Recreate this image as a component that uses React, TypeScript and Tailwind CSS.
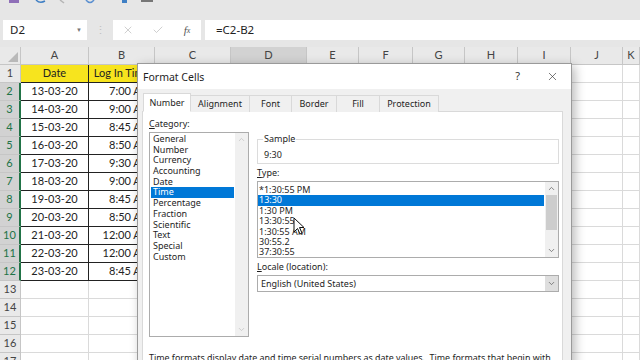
import React from 'react';
import { X, Check, ChevronUp, ChevronDown } from 'lucide-react';

// Spreadsheet data (A1:B12)
const rows: [string, string][] = [
  ['13-03-20', '7:00 AM'],
  ['14-03-20', '9:00 AM'],
  ['15-03-20', '8:45 AM'],
  ['16-03-20', '8:50 AM'],
  ['17-03-20', '9:30 AM'],
  ['18-03-20', '9:00 AM'],
  ['19-03-20', '8:45 AM'],
  ['20-03-20', '8:50 AM'],
  ['21-03-20', '12:00 AM'],
  ['22-03-20', '12:00 AM'],
  ['23-03-20', '8:45 AM'],
];

const letters = ['A', 'B', 'C', 'D', 'E', 'F', 'G', 'H', 'I', 'J', 'K'];
const gridCols =
  'grid grid-cols-[21px_68px_66px_76px_76px_52px_54px_52px_53px_53px_52px_1fr]';

const categories = [
  'General', 'Number', 'Currency', 'Accounting', 'Date', 'Time',
  'Percentage', 'Fraction', 'Scientific', 'Text', 'Special', 'Custom',
];

const types = ['*1:30:55 PM', '13:30', '1:30 PM', '13:30:55', '1:30:55 AM', '30:55.2', '37:30:55'];

const tabs = [
  { label: 'Number', w: 'w-[48px]' },
  { label: 'Alignment', w: 'w-[59px]' },
  { label: 'Font', w: 'w-[42px]' },
  { label: 'Border', w: 'w-[45px]' },
  { label: 'Fill', w: 'w-[43px]' },
  { label: 'Protection', w: 'w-[59px]' },
];

const FormulaBar = () => (
  <div className="h-[47px] bg-[#e6e6e6] flex flex-col font-['Noto_Sans',sans-serif]">
    <div className="h-[20px]">
      <svg width="170" height="6" viewBox="0 0 170 6">
        <rect x="9" y="0" width="10" height="3" fill="#8f6fb8" />
        <path d="M36 0 Q40 4 45 1" stroke="#3f7fc4" strokeWidth="1.5" fill="none" />
        <path d="M60 0 L64 3" stroke="#b5b5b5" strokeWidth="1.5" />
        <path d="M86 0 Q90 5 94 0" stroke="#5a8fd0" strokeWidth="1.5" fill="none" />
        <rect x="122" y="0" width="5" height="3" fill="#3f7fc4" />
        <rect x="141" y="0" width="12" height="2" fill="#777" />
      </svg>
    </div>
    <div className="h-[20px] flex">
      <div className="ml-[3px] w-[84px] bg-white flex items-center justify-between pl-[7px] pr-[5px]">
        <span className="text-[11.5px] text-[#222]">D2</span>
        <span className="text-[6px] text-[#777]">▼</span>
      </div>
      <div className="w-[26px] flex items-center justify-center text-[11px] text-[#c0c0c0]">⋮</div>
      <div className="w-[88px] bg-white flex items-center">
        <div className="w-[30px] flex justify-center">
          <X size={12} strokeWidth={1.3} color="#b5b5b5" />
        </div>
        <div className="w-[30px] flex justify-center">
          <Check size={12} strokeWidth={1.3} color="#b5b5b5" />
        </div>
        <div className="w-[28px] flex justify-center font-['Liberation_Serif',serif] italic text-[11px] text-[#555]">
          f<span className="text-[8px] mt-[3px]">x</span>
        </div>
      </div>
      <div className="ml-[4px] flex-1 bg-white flex items-center pl-[11px] text-[11.5px] text-[#222]">=C2-B2</div>
    </div>
  </div>
);

const Sheet = () => (
  <div className="font-['Lato',sans-serif] text-[11px] text-[#222]">
    <div className={gridCols}>
      <div className="h-[18px] bg-[#e9e9e9] border-r border-b border-[#c6c6c6] flex items-end justify-end pr-[2px] pb-[2px]">
        <svg width="10" height="10" viewBox="0 0 10 10">
          <polygon points="10,0 10,10 0,10" fill="#b9b9b9" />
        </svg>
      </div>
      {letters.map((l) => (
        <div
          key={l}
          className={`h-[18px] border-r border-b border-[#c6c6c6] flex items-center justify-center text-[#444] ${
            l === 'D' ? 'bg-[#d2d2d2]' : 'bg-[#e9e9e9]'
          }`}
        >
          {l}
        </div>
      ))}
    </div>
    {Array.from({ length: 17 }, (_, i) => {
      const r = i + 1;
      const selected = r >= 2 && r <= 12;
      const inData = r <= 12;
      const rec = r >= 2 && r <= 12 ? rows[r - 2] : null;
      return (
        <div key={r} className={gridCols}>
          <div
            className={`h-[18px] border-b border-[#c6c6c6] flex items-center justify-center ${
              selected
                ? 'bg-[#d2d2d2] text-[#217346] border-r-2 border-r-[#217346]'
                : 'bg-[#e9e9e9] text-[#444] border-r'
            }`}
          >
            {r}
          </div>
          <div
            className={`h-[18px] border-r border-b flex items-center justify-center ${
              inData ? 'border-[#222]' : 'border-[#dadada]'
            } ${r === 1 ? 'bg-[#f7e41e]' : 'bg-white'}`}
          >
            {r === 1 ? 'Date' : rec ? rec[0] : ''}
          </div>
          <div
            className={`h-[18px] border-r border-b flex items-center whitespace-nowrap overflow-hidden ${
              inData ? 'border-[#222]' : 'border-[#dadada]'
            } ${r === 1 ? 'bg-[#f7e41e] justify-center' : 'bg-white justify-end pr-[3px]'}`}
          >
            {r === 1 ? 'Log In Time' : rec ? rec[1] : ''}
          </div>
          {letters.slice(2).map((l) => (
            <div key={l} className="h-[18px] border-r border-b border-[#dadada] bg-white" />
          ))}
        </div>
      );
    })}
  </div>
);

const Scroll = ({ thumb }: { thumb?: boolean }) => (
  <div className="w-[13px] flex flex-col items-center bg-[#f0f0f0]">
    <div className="h-[13px] flex items-center justify-center">
      <ChevronUp size={9} strokeWidth={2} color={thumb ? '#606060' : '#c2c2c2'} />
    </div>
    <div className="flex-1 w-full px-[1px]">
      {thumb && <div className="h-[35px] bg-[#cdcdcd]" />}
    </div>
    <div className="h-[13px] flex items-center justify-center">
      <ChevronDown size={9} strokeWidth={2} color={thumb ? '#606060' : '#c2c2c2'} />
    </div>
  </div>
);

const FormatCellsDialog = () => (
  <div className="absolute left-[137px] top-[63px] w-[435px] h-[310px] bg-[#f0f0f0] border border-[#9a9a9a] shadow-[3px_3px_10px_rgba(0,0,0,0.28)] flex flex-col font-['Noto_Sans',sans-serif] text-[#1e1e1e]">
    <div className="h-[25px] bg-white flex items-center pl-[5px] pr-[12px]">
      <span className="text-[10.5px] mt-[2px]">Format Cells</span>
      <span className="ml-auto mr-[26px] text-[11px] text-[#333]">?</span>
      <X size={13} strokeWidth={1.2} color="#333" />
    </div>
    <div className="flex-1 flex flex-col pl-[4px] pr-[8px] pt-[6px]">
      <div className="flex items-end h-[17px] pl-[1px] -mb-px relative z-10 text-[9px]">
        {tabs.map((t, i) => (
          <div
            key={t.label}
            className={`${t.w} flex items-center justify-center border-t border-r border-[#d9d9d9] ${
              i === 0 ? 'h-[19px] bg-white border-l border-b border-b-white' : 'h-[17px] bg-[#f0f0f0]'
            }`}
          >
            {t.label}
          </div>
        ))}
      </div>
      <div className="flex-1 bg-white border border-[#d9d9d9] pl-[6px] pt-[6px] text-[9px] leading-[12px]">
        <div className="flex gap-[8px]">
          <div className="w-[100px]">
            <div className="h-[12px]">
              <span className="underline">C</span>ategory:
            </div>
            <div className="mt-[2px] h-[205px] border border-[#acacac] flex">
              <div className="w-[84px] pt-[1px] pl-[1px]">
                {categories.map((c) => (
                  <div
                    key={c}
                    className={`h-[10.7px] leading-[10.7px] pl-[2px] ${c === 'Time' ? 'bg-[#0078d7] text-white' : ''}`}
                  >
                    {c}
                  </div>
                ))}
              </div>
              <div className="flex-1 flex justify-end">
                <Scroll />
              </div>
            </div>
          </div>
          <div className="w-[302px] mt-[15px]">
            <fieldset className="border border-[#dcdcdc] px-[5px] pb-[2px]">
              <legend className="px-[1px] h-[12px]">Sample</legend>
              <div className="pt-[4px] pl-[1px]">9:30</div>
            </fieldset>
            <div className="mt-[3px] h-[12px]">
              <span className="underline">T</span>ype:
            </div>
            <div className="mt-[2px] h-[77px] border border-[#acacac] flex">
              <div className="w-[286px] pt-[3px]">
                {types.map((t) => (
                  <div
                    key={t}
                    className={`h-[10.4px] leading-[10.4px] pl-[1px] ${t === '13:30' ? 'bg-[#0078d7] text-white' : ''}`}
                  >
                    {t}
                  </div>
                ))}
              </div>
              <div className="flex-1 flex justify-end">
                <Scroll thumb />
              </div>
            </div>
            <div className="mt-[3px] h-[12px]">
              <span className="underline">L</span>ocale (location):
            </div>
            <div className="mt-[2px] h-[17px] border border-[#acacac] flex items-center">
              <span className="pl-[3px]">English (United States)</span>
              <div className="ml-auto w-[13px] h-full bg-[#dedede] flex items-center justify-center">
                <ChevronDown size={9} strokeWidth={2} color="#606060" />
              </div>
            </div>
          </div>
        </div>
        <div className="mt-[15px] whitespace-nowrap text-[8.9px]">
          Time formats display date and time serial numbers as date values.&nbsp; Time formats that begin with
        </div>
      </div>
    </div>
    <svg className="absolute left-[155px] top-[153px]" width="13" height="19" viewBox="0 0 13 19">
      <path d="M1 1 L1 15 L4.5 11.5 L7 17 L9 16 L6.5 10.5 L11 10.5 Z" fill="white" stroke="#111" strokeWidth="1" />
    </svg>
  </div>
);

export default function App() {
  return (
    <div className="w-[640px] h-[360px] overflow-hidden relative bg-white">
      <FormulaBar />
      <Sheet />
      <FormatCellsDialog />
    </div>
  );
}
